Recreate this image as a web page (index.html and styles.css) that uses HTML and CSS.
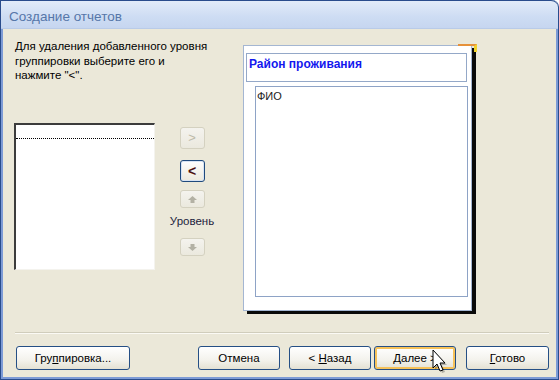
FILE: index.html
```html
<!DOCTYPE html>
<html lang="ru">
<head>
    <meta charset="UTF-8">
    <title>Создание отчетов</title>
    <link rel="stylesheet" href="styles.css">
</head>
<body>
    <div class="window">
        <div class="titlebar">Создание отчетов</div>

        <div class="content">
            <div class="left">
                <p class="hint">Для удаления добавленного уровня<br>группировки выберите его и<br>нажмите "&lt;".</p>

                <div class="picker">
                    <div class="listbox">
                        <div class="list-row"></div>
                    </div>
                    <div class="tools">
                        <button class="tool tool-add" disabled>&gt;</button>
                        <button class="tool tool-remove">&lt;</button>
                        <button class="tool tool-small tool-up" disabled>
                            <svg width="9" height="7" viewBox="0 0 9 7"><path d="M4.5 0 L9 4 L6.5 4 L6.5 7 L2.5 7 L2.5 4 L0 4 Z" fill="#b3b1a4"/></svg>
                        </button>
                        <span class="tools-label">Уровень</span>
                        <button class="tool tool-small tool-down" disabled>
                            <svg width="9" height="7" viewBox="0 0 9 7"><path d="M4.5 7 L9 3 L6.5 3 L6.5 0 L2.5 0 L2.5 3 L0 3 Z" fill="#b3b1a4"/></svg>
                        </button>
                    </div>
                </div>
            </div>

            <div class="preview">
                <div class="page">
                    <span class="page-corner"></span>
                    <div class="group-head">Район проживания</div>
                    <div class="group-body">ФИО</div>
                </div>
            </div>
        </div>

        <div class="footer">
            <button class="btn btn-group">Гру<u>п</u>пировка...</button>
            <div class="footer-right">
                <button class="btn btn-cancel">Отмена</button>
                <button class="btn btn-back">&lt; <u>Н</u>азад</button>
                <button class="btn btn-next"><u>Д</u>алее &gt;</button>
                <button class="btn btn-finish"><u>Г</u>отово</button>
            </div>
        </div>

        <svg class="cursor" width="16" height="26" viewBox="0 0 16 26">
            <path d="M3 3 L3 21 L7 17 L10 24 L13 23 L10 16 L15 16 Z" fill="#000" opacity="0.25"/>
            <path d="M1 1 L1 19 L5 15 L8 22 L11 21 L8 14 L13 14 Z" fill="#fff" stroke="#000" stroke-width="1" stroke-linejoin="round"/>
        </svg>
    </div>
</body>
</html>
```

FILE: styles.css
```css
body {
    margin: 0;
    background: #ffffff;
    font-family: "Liberation Sans", Arial, sans-serif;
    font-size: 11px;
    color: #000;
}
.window {
    position: relative;
    width: 559px;
    height: 380px;
    box-sizing: border-box;
    background: #ebe8d9;
    border: 1px solid #2a4c8c;
    border-top: none;
    border-radius: 0 7px 0 0;
    box-shadow: inset 2px 0 0 #7d9bd6, inset -2px 0 0 #7d9bd6, inset 0 -2px 0 #7d9bd6;
    overflow: hidden;
}
.titlebar {
    height: 29px;
    box-sizing: border-box;
    padding: 8px 0 0 8px;
    background: linear-gradient(#e2ebf9, #cddcf3 60%, #c6d6f0);
    border-top: 1px solid #2a4c8c;
    border-bottom: 1px solid #b9cbe8;
    border-radius: 0 7px 0 0;
    color: #5677a9;
    font-size: 13.5px;
}
.content {
    display: flex;
    height: 290px;
}
.left {
    width: 229px;
    padding: 10px 0 0 13px;
}
.hint {
    margin: 0 0 0 1px;
    line-height: 14.5px;
    font-size: 11.5px;
    color: #000;
}
.picker {
    display: flex;
    margin-top: 40px;
}
.listbox {
    width: 141px;
    height: 147px;
    box-sizing: border-box;
    background: #fff;
    border-top: 2px solid #3c3c3c;
    border-left: 2px solid #3c3c3c;
    border-right: 1px solid #f4f3ee;
    border-bottom: 1px solid #f4f3ee;
}
.list-row {
    height: 13px;
    border-bottom: 1px dotted #000;
}
.tools {
    display: flex;
    flex-direction: column;
    align-items: center;
    width: 50px;
    margin-left: 12px;
}
.tool {
    width: 25px;
    height: 22px;
    padding: 0;
    border: 1px solid #d4d1c0;
    border-radius: 3px;
    background: linear-gradient(#f4f3ee, #ebe9de);
    color: #bdbaa9;
    font-family: "Liberation Sans", Arial, sans-serif;
    font-size: 13px;
    line-height: 18px;
}
.tool-add {
    margin-top: 4px;
}
.tool-remove {
    margin-top: 11px;
    border: 1px solid #1f4a7d;
    box-shadow: inset 0 0 0 1px #d7e3f3;
    background: linear-gradient(#fefefe, #ece9dd);
    color: #4b1010;
    font-weight: bold;
    font-size: 14px;
}
.tool-small {
    height: 18px;
    line-height: 10px;
}
.tool-up {
    margin-top: 8px;
}
.tools-label {
    margin-top: 6px;
    color: #1c1c3c;
    font-size: 11.5px;
    line-height: 14px;
}
.tool-down {
    margin-top: 10px;
}
.preview {
    padding: 16px 0 0 0;
}
.page {
    position: relative;
    width: 229px;
    height: 266px;
    box-sizing: border-box;
    padding: 7px 4px 0 2px;
    background: #fff;
    border: 1px solid #a4b6d2;
    box-shadow: 4px 3px 0 #0a0a0a;
}
.page-corner {
    position: absolute;
    top: -2px;
    right: -6px;
    width: 16px;
    height: 6px;
    border-top: 2px solid #e6913a;
    border-right: 3px solid #f2d22c;
}
.group-head {
    height: 29px;
    box-sizing: border-box;
    padding: 3px 0 0 2px;
    border: 1px solid #94a8c8;
    color: #1418ee;
    font-weight: bold;
    font-size: 12px;
}
.group-body {
    height: 211px;
    margin: 4px 0 0 9px;
    width: 213px;
    box-sizing: border-box;
    padding: 3px 0 0 1px;
    border: 1px solid #8ea3c6;
    color: #222;
    font-size: 11px;
}
.footer {
    display: flex;
    margin: 13px 9px 0 14px;
    padding-top: 13px;
    border-top: 1px solid #d0cdbc;
    box-shadow: inset 0 1px 0 #fbfaf5;
}
.footer-right {
    display: flex;
    margin-left: auto;
}
.btn {
    flex-shrink: 0;
    width: 82px;
    height: 24px;
    padding: 0;
    border: 1px solid #254f85;
    border-radius: 3px;
    background: linear-gradient(#ffffff, #f3f2ec 60%, #e4e1d3);
    font-family: "Liberation Sans", Arial, sans-serif;
    font-size: 11.5px;
    color: #000;
}
.btn-group {
    width: 114px;
    margin-left: 1px;
}
.btn-cancel {
    margin-right: 9px;
}
.btn-back {
    margin-right: 3px;
}
.btn-next {
    margin-right: 10px;
    box-shadow: inset 0 0 0 2px #f6c25a;
}
.btn-finish {
    width: 83px;
}
.cursor {
    position: absolute;
    left: 431px;
    top: 349px;
}
```
